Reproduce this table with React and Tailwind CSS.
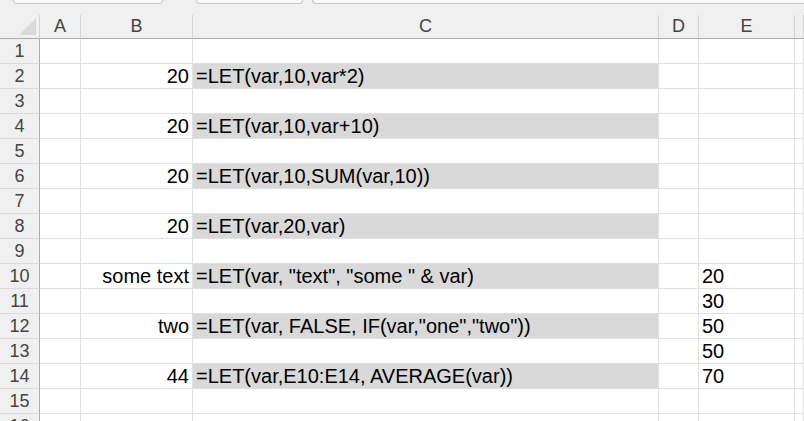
import React from "react";

const COLS = ["A", "B", "C", "D", "E", "F"];

// cell values keyed by row number
const DATA = {
  2: { B: "20", C: "=LET(var,10,var*2)" },
  4: { B: "20", C: "=LET(var,10,var+10)" },
  6: { B: "20", C: "=LET(var,10,SUM(var,10))" },
  8: { B: "20", C: "=LET(var,20,var)" },
  10: { B: "some text", C: '=LET(var, "text", "some " & var)', E: "20" },
  11: { E: "30" },
  12: { B: "two", C: '=LET(var, FALSE, IF(var,"one","two"))', E: "50" },
  13: { E: "50" },
  14: { B: "44", C: "=LET(var,E10:E14, AVERAGE(var))", E: "70" },
};

const FILLED = [2, 4, 6, 8, 10, 12, 14];

function Tabs() {
  return (
    <div className="flex h-[15px] bg-[#f0f0f0]">
      <div className="ml-[13px] h-[4px] w-[150px] rounded-b-[6px] border border-t-0 border-[#c6c6c6] bg-[#fbfbfb]" />
      <div className="ml-[33px] h-[4px] w-[107px] rounded-b-[6px] border border-t-0 border-[#c6c6c6] bg-[#fbfbfb]" />
      <div className="ml-[9px] h-[4px] flex-1 rounded-bl-[6px] border border-r-0 border-t-0 border-[#c6c6c6] bg-[#fbfbfb]" />
    </div>
  );
}

function Cell({ row, col }) {
  const value = DATA[row]?.[col];
  const filled = col === "C" && FILLED.includes(row);
  const align = col === "B" ? "justify-end pr-[3px]" : "pl-[3px]";
  return (
    <div
      className={`flex items-center overflow-hidden whitespace-pre border-b border-r border-[#e1e1e1] text-[20px] leading-[24px] text-black ${align} ${
        filled ? "bg-[#d9d9d9]" : "bg-white"
      }`}
    >
      {value}
    </div>
  );
}

export default function App() {
  const rows = Array.from({ length: 16 }, (_, i) => i + 1);

  return (
    <div
      className="h-[421px] w-[804px] overflow-hidden bg-white"
      style={{ fontFamily: '"Liberation Sans", Arial, sans-serif' }}
    >
      <Tabs />

      <div className="grid grid-cols-[40px_41px_112px_466px_40px_96px_1fr] auto-rows-[25px] [grid-template-rows:24px]">
        {/* Column headers */}
        <div className="relative border-b border-r border-b-[#ababab] border-r-[#d4d4d4] bg-[#f0f0f0]">
          <svg
            className="absolute left-[19px] top-[3px]"
            width="17"
            height="17"
            viewBox="0 0 17 17"
          >
            <polygon points="17,0 17,17 0,17" fill="#dadada" />
          </svg>
        </div>
        {COLS.map((c) => (
          <div
            key={c}
            className="flex items-center justify-center border-b border-r border-b-[#ababab] border-r-[#d4d4d4] bg-[#f0f0f0] text-[18px] leading-[23px] text-[#444]"
          >
            {c === "F" ? "" : c}
          </div>
        ))}

        {/* Rows */}
        {rows.map((r) => (
          <React.Fragment key={r}>
            <div className="flex items-center justify-center border-b border-r border-b-[#dcdcdc] border-r-[#ababab] bg-[#f0f0f0] text-[18px] leading-[24px] text-[#444]">
              {r}
            </div>
            {COLS.map((c) => (
              <Cell key={c} row={r} col={c} />
            ))}
          </React.Fragment>
        ))}
      </div>
    </div>
  );
}
